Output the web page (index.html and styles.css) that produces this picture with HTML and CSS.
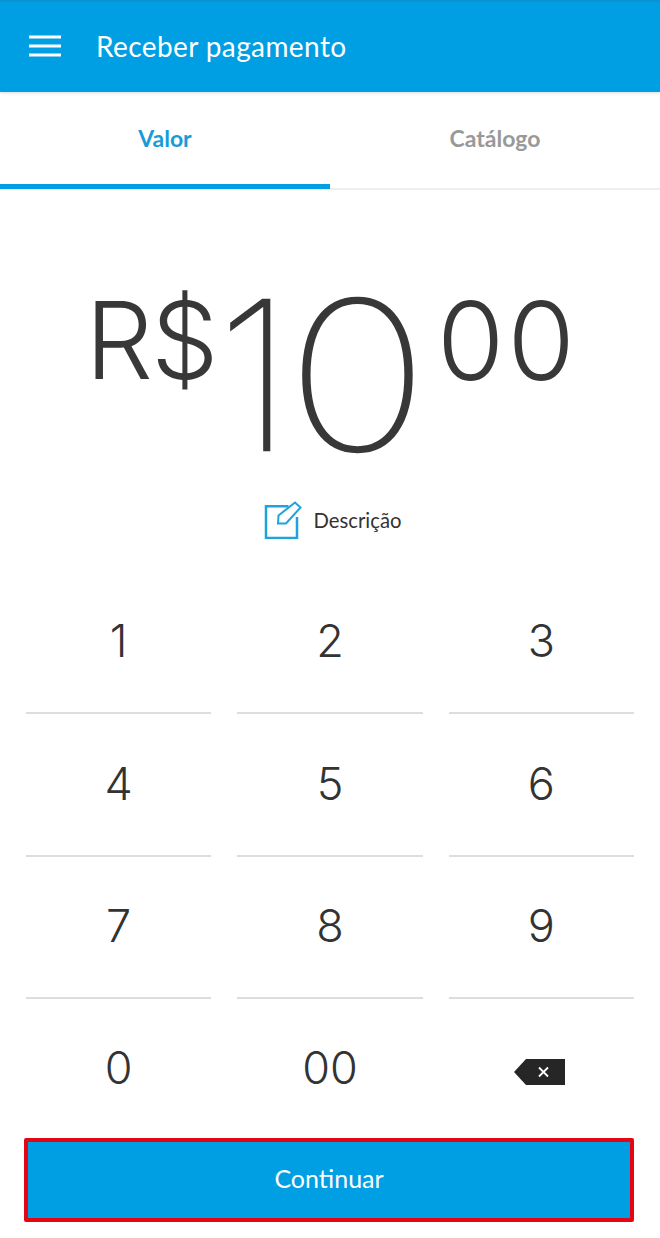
FILE: index.html
```html
<!DOCTYPE html>
<html lang="pt-BR">
<head>
<meta charset="utf-8">
<title>Receber pagamento</title>
<link rel="stylesheet" href="styles.css">
</head>
<body>
<div class="app">
  <header class="appbar">
    <svg class="menu" width="32" height="22" viewBox="0 0 32 22"><path d="M0 2h32M0 11h32M0 20h32" stroke="#fff" stroke-width="3" fill="none"/></svg>
    <h1 class="title">Receber pagamento</h1>
  </header>
  <nav class="tabs">
    <div class="tab active">Valor</div>
    <div class="tab">Catálogo</div>
  </nav>
  <section class="amount">
    <span class="cur">R$</span>
    <span class="int"><span class="one">1</span><span class="zero">0</span></span>
    <span class="cents">00</span>
  </section>
  <div class="desc">
    <svg class="edit" width="38" height="38" viewBox="0 0 38 38" fill="none" stroke="#1ea3dc" stroke-width="2.500"><path d="M24.500 5.200H2V37H33V16"/><path d="M14 22.500L14.500 14.500L31 1.500L36.500 6.500L22 22.500Z" stroke-width="2"/></svg>
    <span>Descrição</span>
  </div>
  <div class="keypad">
    <div class="key">1</div><div class="key">2</div><div class="key">3</div>
    <div class="key">4</div><div class="key">5</div><div class="key">6</div>
    <div class="key">7</div><div class="key">8</div><div class="key">9</div>
    <div class="key last">0</div><div class="key last">00</div>
    <div class="key last"><svg class="back" width="51" height="26" viewBox="0 0 51 26"><path d="M12 0h39v26H12L0 13z" fill="#262626"/><path d="M25 8.500l9 9M34 8.500l-9 9" stroke="#fff" stroke-width="1.800" fill="none"/></svg></div>
  </div>
  <button class="cta">Continuar</button>
</div>
</body>
</html>
```
FILE: styles.css
```css
* { box-sizing: border-box; }
html, body { margin: 0; padding: 0; background: #fff; }
.app { width: 660px; height: 1238px; display: flex; flex-direction: column; font-family: "Lato", "Liberation Sans", sans-serif; color: #333; overflow: hidden; }
.appbar { height: 92px; background: #009ee3; border-top: 2px solid #0b93cf; display: flex; align-items: center; padding: 0 0 2px 29px; gap: 35px; flex: none; box-shadow: 0 1px 3px rgba(0,0,0,.15); }
.menu { flex: none; }
.title { margin: 0; font-size: 28px; font-weight: 400; color: #fff; letter-spacing: .4px; }
.tabs { display: flex; height: 98px; flex: none; border-bottom: 2px solid #eee; }
.tab { flex: 1; display: flex; align-items: center; justify-content: center; font-size: 23px; font-weight: 700; color: #999; padding-bottom: 4px; }
.tab.active { color: #1a9bd7; border-bottom: 5px solid #009ee3; margin-bottom: -1px; padding-bottom: 0; }
.amount { height: 313px; flex: none; display: flex; justify-content: center; font-family: "Inter", sans-serif; font-weight: 300; color: #383838; }
.cur { font-size: 107px; line-height: 1; margin: 0 3px; padding-top: 97px; letter-spacing: -2px; }
.int { display: flex; font-size: 206px; line-height: 1; padding-top: 82px; margin-right: 20px; font-weight: 100; -webkit-text-stroke: 2.500px #383838; }
.one { display: block; transform: translateX(-3px); }
.zero { display: block; transform: translateX(1.500px) scaleX(1.17); }
.cents { font-size: 109px; line-height: 1; padding-top: 96px; letter-spacing: 3px; }
.desc { display: flex; align-items: center; justify-content: center; gap: 12px; height: 38px; flex: none; font-size: 20.300px; color: #333; padding: 0 0 4px 5px; }
.keypad { display: grid; grid-template-columns: repeat(3, 1fr); column-gap: 26px; margin: 30px 26px 0; flex: none; }
.key { height: 143px; border-bottom: 2px solid #ddd; display: flex; align-items: center; justify-content: center; font-family: "Inter", sans-serif; font-size: 45px; font-weight: 300; color: #333; padding-bottom: 2px; }
.key:nth-child(n+4) { height: 142.500px; }
.key.last { border-bottom: 0; height: 139px; }
.back { margin: 8px 4px 0 0; }
.cta { margin: auto 0 16px 24px; width: 610px; height: 84px; flex: none; background: #009ee3; border: 4px solid #e30613; color: #fff; font-family: inherit; font-size: 25px; font-weight: 400; border-radius: 2px; padding: 0 0 4px; }
```
